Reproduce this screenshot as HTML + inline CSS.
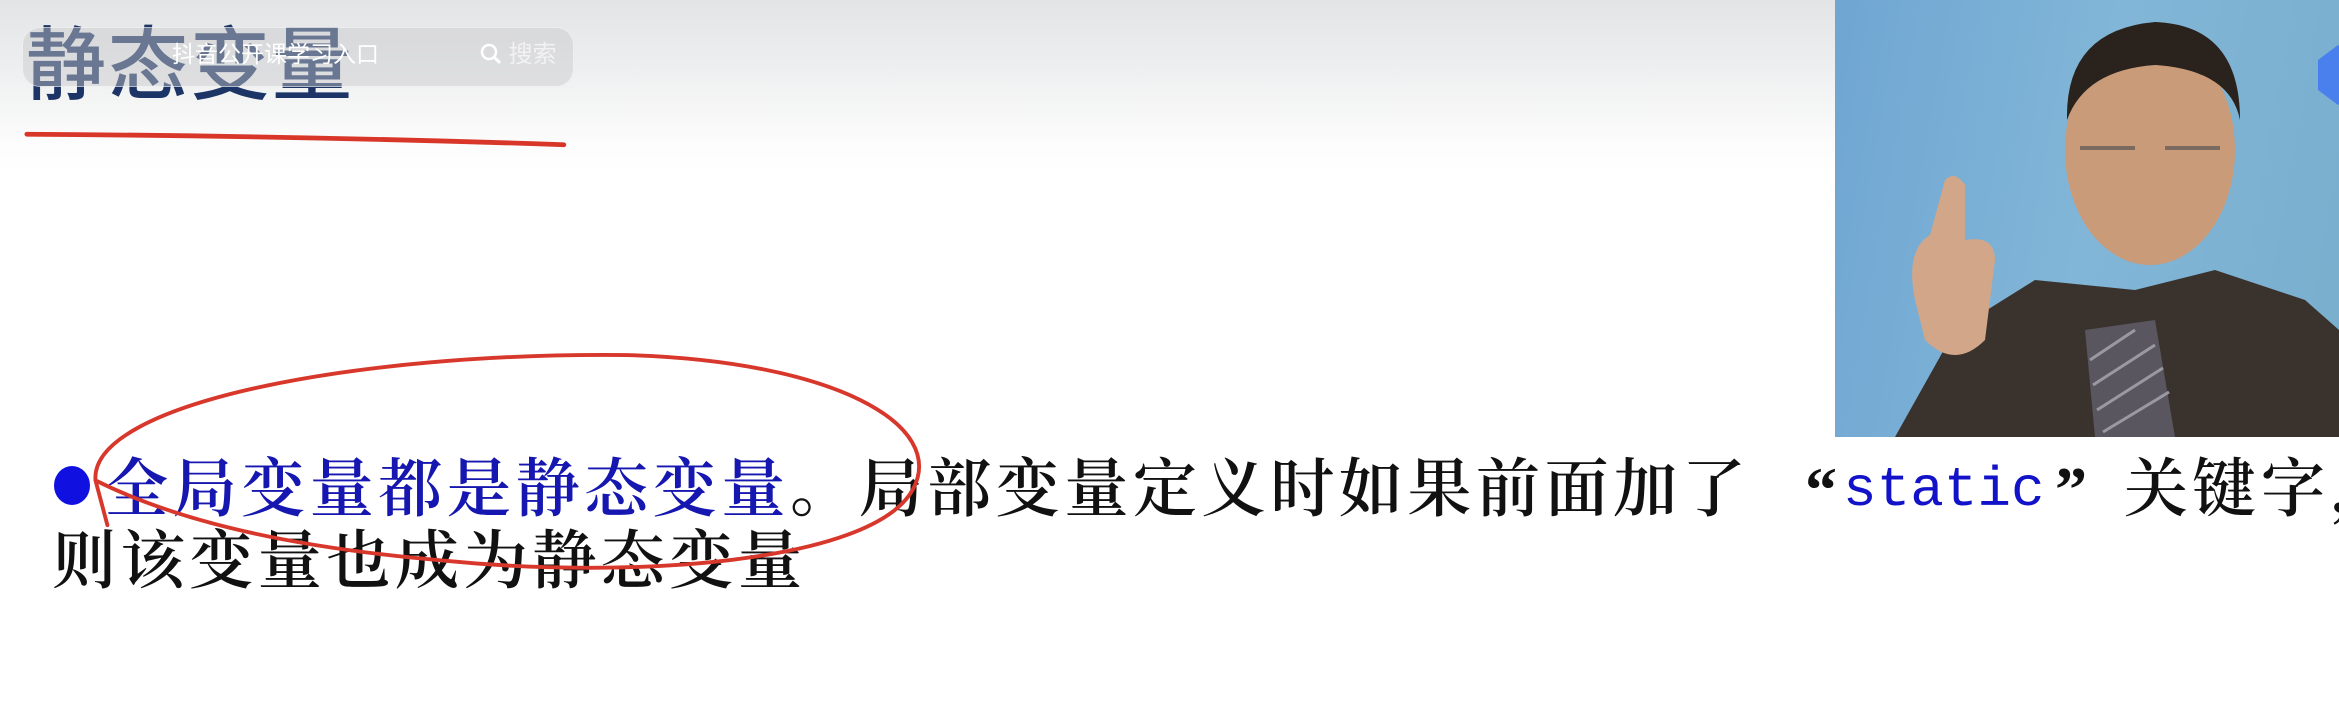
<!DOCTYPE html>
<html><head><meta charset="utf-8">
<style>
*{margin:0;padding:0;box-sizing:border-box}
html,body{width:2339px;height:715px;overflow:hidden;background:#fff}
body{position:relative;background:linear-gradient(#e3e4e6 0px,#eeeff0 70px,#fafafa 130px,#fff 170px)}
.t{position:absolute;white-space:nowrap;font-family:"Liberation Serif","Noto Serif CJK SC",serif;font-size:64px;letter-spacing:4.6px;color:#111;line-height:1;font-weight:600}
.title{position:absolute;left:26px;top:26px;font-family:"Liberation Sans","Noto Sans CJK SC",sans-serif;font-size:80px;font-weight:500;color:#1d3566;line-height:1;letter-spacing:2px}
.search{position:absolute;left:22px;top:27px;width:552px;height:60px;border-radius:18px;background:rgba(200,200,202,0.45);border:1px solid rgba(255,255,255,0.5)}
.stxt{position:absolute;top:43px;font-family:"Liberation Sans","Noto Sans CJK SC",sans-serif;font-size:24px;color:#fff;line-height:1}
</style></head><body>
<div class="title">静态变量</div>
<div class="search"></div>
<div class="stxt" style="left:172px;font-size:23px">抖音公开课学习入口</div>
<div class="stxt" style="left:480px;color:#f2f2f2">
<svg width="22" height="22" viewBox="0 0 22 22" style="vertical-align:-3px"><circle cx="9" cy="9" r="7" fill="none" stroke="#fff" stroke-width="2.5"/><path d="M14 14 L20 20" stroke="#fff" stroke-width="3"/></svg> 搜索</div>

<div style="position:absolute;left:54px;top:466px;width:36px;height:39px;border-radius:50%;background:#1010e0"></div>
<div class="t" style="left:104px;top:458px;color:#1616b0">全局变量都是静态变量</div>
<div class="t" style="left:790px;top:458px">。局部变量定义时如果前面加了</div>
<div class="t" style="left:1805px;top:458px">“</div>
<div style="position:absolute;left:1843px;top:462px;font-family:'Liberation Mono',monospace;font-size:56px;color:#1212c8;line-height:1">static</div>
<div class="t" style="left:2055px;top:458px">”</div>
<div class="t" style="left:2124px;top:458px">关</div>
<div class="t" style="left:2192px;top:458px">键</div>
<div class="t" style="left:2261px;top:458px">字，</div>
<div class="t" style="left:52px;top:530px">则该变量也成为静态变量</div>

<div style="position:absolute;left:1835px;top:0;width:504px;height:437px;overflow:hidden;background:linear-gradient(100deg,#6fa6d2,#82b6d8 50%,#7aaecd)">
<svg width="504" height="437" viewBox="0 0 504 437">
<path d="M60 437 L120 330 L200 280 L300 290 L380 270 L470 300 L504 330 L504 437 Z" fill="#3a332d"/>
<path d="M250 330 L320 320 L340 437 L260 437 Z" fill="#5a5660"/>
<g stroke="#9a98a0" stroke-width="3"><path d="M255 360 L300 330"/><path d="M258 385 L320 345"/><path d="M262 410 L328 368"/><path d="M268 432 L334 392"/></g>
<ellipse cx="315" cy="150" rx="85" ry="115" fill="#c99b78"/>
<path d="M232 120 Q230 30 320 22 Q405 25 405 120 Q395 70 320 65 Q250 70 232 120 Z" fill="#2a221d"/>
<path d="M245 148 h55 M330 148 h55" stroke="#7b6a60" stroke-width="4"/>
<path d="M80 300 Q70 250 95 235 L110 180 Q120 170 130 185 L130 240 Q160 235 160 260 L150 340 Q120 370 90 340 Z" fill="#d2a688"/>
</svg>
<div style="position:absolute;left:483px;top:45px;width:40px;height:60px;background:#4a80ee;clip-path:polygon(50% 0,100% 25%,100% 75%,50% 100%,0 75%,0 25%);border-radius:6px"></div>
</div>

<svg style="position:absolute;left:0;top:0" width="2339" height="715" viewBox="0 0 1568 479.3" preserveAspectRatio="none">
<path d="M18 90 Q200 91 378 97" fill="none" stroke="#d9362a" stroke-width="3.2" stroke-linecap="round"/>
<path d="M72 352 L64 322 C60 270 240 236 420 238 C560 242 635 285 612 328 C585 378 420 388 300 376 C180 366 110 345 64 322" fill="none" stroke="#d8382c" stroke-width="2.6" stroke-linecap="round"/>
</svg>
</body></html>
